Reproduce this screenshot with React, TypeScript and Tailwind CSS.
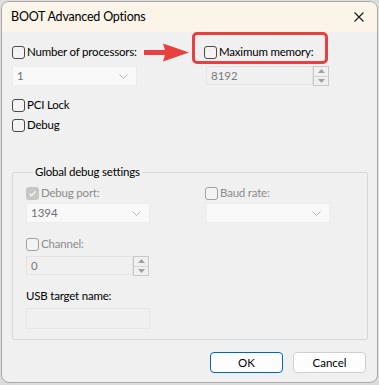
const font = { fontFamily: 'Lato, "Noto Sans", "Liberation Sans", sans-serif' };

function Check({ checked = false, disabled = false }: { checked?: boolean; disabled?: boolean }) {
  if (checked && disabled) {
    return (
      <span className="flex h-[13px] w-[13px] shrink-0 items-center justify-center rounded-[3px] bg-[#c6c6c6]">
        <svg width="9" height="9" viewBox="0 0 9 9">
          <path d="M1.5 4.8 L3.6 6.8 L7.6 2.2" fill="none" stroke="#f4f4f4" strokeWidth="1.3" />
        </svg>
      </span>
    );
  }
  return (
    <span
      className={
        "h-[13px] w-[13px] shrink-0 rounded-[3px] border " +
        (disabled ? "border-[#a0a0a0] bg-[#f3f3f3]" : "border-[#4a4a4a] bg-[#f3f3f3]")
      }
    />
  );
}

function CheckRow({ label, checked, disabled }: { label: string; checked?: boolean; disabled?: boolean }) {
  return (
    <div className="flex h-[14px] items-center gap-[2px]">
      <Check checked={checked} disabled={disabled} />
      <span
        className={
          "text-[11.5px] leading-[14px] tracking-[-0.2px] " + (disabled ? "text-[#8c8c8c]" : "text-black")
        }
      >
        {label}
      </span>
    </div>
  );
}

function Combo({ value, w }: { value?: string; w: string }) {
  return (
    <div className={"flex h-[20px] items-center justify-between border border-[#ececec] bg-[#f9f9f9] pl-[4px] pr-[8px] " + w}>
      <span className="text-[11.5px] text-[#6e6e6e]">{value}</span>
      <svg width="9" height="5" viewBox="0 0 9 5">
        <path d="M0.5 0.5 L4.5 4.5 L8.5 0.5" fill="none" stroke="#b4b4b4" strokeWidth="1" />
      </svg>
    </div>
  );
}

function Spin({ value, w }: { value: string; w: string }) {
  return (
    <div className="flex h-[20px] items-start">
      <div className={"flex h-[19px] items-center border border-[#e4e4e4] bg-[#f0f0f0] pl-[4px] " + w}>
        <span className="text-[11.5px] text-[#7a7a7a]">{value}</span>
      </div>
      <div className="flex h-[20px] w-[16px] flex-col border border-[#c8c8c8] bg-[#f0f0f0]">
        <div className="flex flex-1 items-center justify-center border-b border-[#d6d6d6]">
          <svg width="7" height="4" viewBox="0 0 7 4">
            <path d="M0 4 L3.5 0 L7 4 Z" fill="#a0a0a0" />
          </svg>
        </div>
        <div className="flex flex-1 items-center justify-center">
          <svg width="7" height="4" viewBox="0 0 7 4">
            <path d="M0 0 L3.5 4 L7 0 Z" fill="#a0a0a0" />
          </svg>
        </div>
      </div>
    </div>
  );
}

export default function App() {
  return (
    <div className="h-[385px] w-[379px] bg-[#dcdcdc] pl-[1px] pt-[1px]" style={font}>
      <div className="flex h-[382px] w-[377px] flex-col overflow-hidden rounded-[8px] border border-[#a8a8a8] bg-[#f0f0f0]">
        {/* Title bar */}
        <div className="flex h-[30px] shrink-0 items-center justify-between bg-[#fbf4e8] pl-[9px] pr-[13px]">
          <span className="text-[12.5px] tracking-[-0.2px] text-black">BOOT Advanced Options</span>
          <svg width="10" height="10" viewBox="0 0 10 10">
            <path d="M0.5 0.5 L9.5 9.5 M9.5 0.5 L0.5 9.5" stroke="#1a1a1a" strokeWidth="1.1" />
          </svg>
        </div>

        {/* Body */}
        <div className="relative flex flex-1 flex-col pl-[10px] pr-[9px]">
          <div className="mt-[13px] flex">
            <div className="w-[192px]">
              <CheckRow label="Number of processors:" />
            </div>
            <CheckRow label="Maximum memory:" />
          </div>

          <div className="mt-[7px] flex">
            <div className="w-[194px]">
              <Combo value="1" w="w-[125px]" />
            </div>
            <Spin value="8192" w="w-[107px]" />
          </div>

          <div className="mt-[12px] flex flex-col gap-[6px]">
            <CheckRow label="PCI Lock" />
            <CheckRow label="Debug" />
          </div>

          <fieldset className="mt-[32px] h-[176px] w-[356px] rounded-[2px] border border-[#d6d6d6] pl-[13px]">
            <legend className="ml-[7px] px-[2px] text-[11.5px] leading-[16px] tracking-[-0.2px] text-black">
              Global debug settings
            </legend>
            <div className="mt-[6px] flex">
              <div className="w-[179px]">
                <CheckRow label="Debug port:" checked disabled />
              </div>
              <CheckRow label="Baud rate:" disabled />
            </div>
            <div className="mt-[3px] flex">
              <div className="w-[180px]">
                <Combo value="1394" w="w-[124px]" />
              </div>
              <Combo w="w-[124px]" />
            </div>
            <div className="mt-[14px]">
              <CheckRow label="Channel:" disabled />
            </div>
            <div className="mt-[5px]">
              <Spin value="0" w="w-[107px]" />
            </div>
            <div className="mt-[13px] text-[11.5px] leading-[14px] tracking-[-0.2px] text-black">USB target name:</div>
            <div className="mt-[5px] h-[21px] w-[124px] border border-[#e6e6e6] bg-[#f0f0f0]" />
          </fieldset>

          <div className="mt-[12px] flex justify-end gap-[10px] pr-[2px]">
            <button className="h-[21px] w-[73px] rounded-[4px] border border-[#0067c0] bg-[#fdfdfd] text-[11.5px] text-black">
              OK
            </button>
            <button className="h-[21px] w-[73px] rounded-[4px] border border-[#d0d0d0] bg-[#fdfdfd] text-[11.5px] text-black">
              Cancel
            </button>
          </div>

          {/* Annotation overlay */}
          <svg className="absolute left-[142px] top-[10px]" width="48" height="21" viewBox="0 0 48 21">
            <path d="M0 8 L21 8 L19 1.5 L45 10.5 L19 19.5 L21 13 L0 13 Z" fill="#e8403f" />
          </svg>
          <div className="absolute left-[190px] top-[0px] h-[32px] w-[136px] rounded-[5px] border-[3px] border-[#e8403f]" />
        </div>
      </div>
    </div>
  );
}
